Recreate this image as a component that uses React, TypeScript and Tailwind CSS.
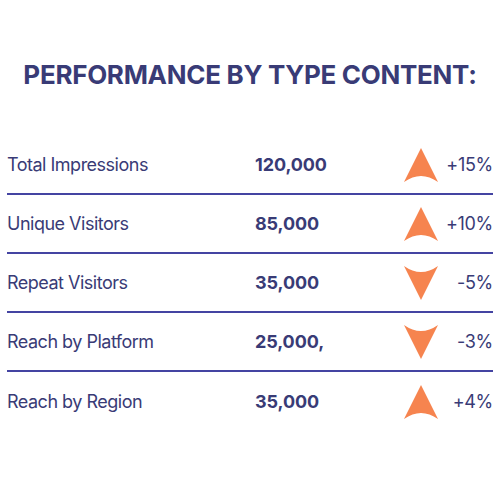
import React from 'react';

type Row = { label: string; value: string; up: boolean; change: string };

const rows: Row[] = [
  { label: 'Total Impressions', value: '120,000', up: true, change: '+15%' },
  { label: 'Unique Visitors', value: '85,000', up: true, change: '+10%' },
  { label: 'Repeat Visitors', value: '35,000', up: false, change: '-5%' },
  { label: 'Reach by Platform', value: '25,000,', up: false, change: '-3%' },
  { label: 'Reach by Region', value: '35,000', up: true, change: '+4%' },
];

const Arrow: React.FC<{ up: boolean }> = ({ up }) => (
  <svg width="34" height="34" viewBox="0 0 34 34" className="block">
    {up ? (
      <path d="M17 0 L34 34 Q17 22 0 34 Z" fill="#f6844f" />
    ) : (
      <path d="M0 0 Q17 12 34 0 L17 34 Z" fill="#f6844f" />
    )}
  </svg>
);

const App: React.FC = () => {
  return (
    <div
      className="w-[500px] h-[500px] bg-white overflow-hidden pt-[58px] text-[#393b76]"
      style={{ fontFamily: 'Inter, "Liberation Sans", sans-serif' }}
    >
      <h1 className="text-center text-[26px] leading-[34px] font-bold tracking-[-0.3px]">
        PERFORMANCE BY TYPE CONTENT:
      </h1>

      <div className="mt-[44px] px-[7px]">
        {rows.map((r, i) => (
          <div
            key={r.label}
            className={
              'grid grid-cols-[248px_148px_36px_1fr] items-center h-[59px] ' +
              (i < rows.length - 1 ? 'border-b-2 border-[#4444a2]' : '')
            }
          >
            <span className="text-[18px] tracking-[-0.5px]">{r.label}</span>
            <span className="text-[18px] font-bold tracking-[-0.1px]">{r.value}</span>
            <div className="flex justify-center">
              <Arrow up={r.up} />
            </div>
            <span className="text-right text-[18px] tracking-[-0.3px]">{r.change}</span>
          </div>
        ))}
      </div>
    </div>
  );
};

export default App;
